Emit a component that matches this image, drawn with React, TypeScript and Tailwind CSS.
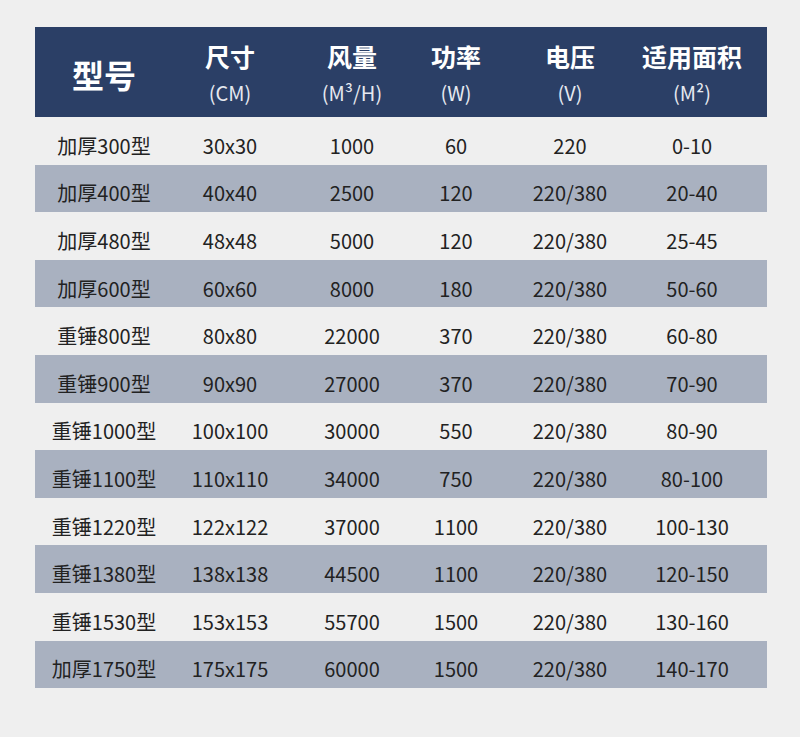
const headers = [
  { title: '尺寸', unit: '(CM)' },
  { title: '风量', unit: '(M³/H)' },
  { title: '功率', unit: '(W)' },
  { title: '电压', unit: '(V)' },
  { title: '适用面积', unit: '(M²)' },
];

const rows = [
  ['加厚300型', '30x30', '1000', '60', '220', '0-10'],
  ['加厚400型', '40x40', '2500', '120', '220/380', '20-40'],
  ['加厚480型', '48x48', '5000', '120', '220/380', '25-45'],
  ['加厚600型', '60x60', '8000', '180', '220/380', '50-60'],
  ['重锤800型', '80x80', '22000', '370', '220/380', '60-80'],
  ['重锤900型', '90x90', '27000', '370', '220/380', '70-90'],
  ['重锤1000型', '100x100', '30000', '550', '220/380', '80-90'],
  ['重锤1100型', '110x110', '34000', '750', '220/380', '80-100'],
  ['重锤1220型', '122x122', '37000', '1100', '220/380', '100-130'],
  ['重锤1380型', '138x138', '44500', '1100', '220/380', '120-150'],
  ['重锤1530型', '153x153', '55700', '1500', '220/380', '130-160'],
  ['加厚1750型', '175x175', '60000', '1500', '220/380', '140-170'],
];

const cols = 'grid grid-cols-[138px_114px_130px_78px_150px_94px_28px]';

export default function App() {
  return (
    <div
      className="w-[800px] h-[737px] bg-[#efefef] pt-[27px] pl-[35px]"
      style={{ fontFamily: '"Noto Sans CJK SC", "Noto Sans", sans-serif' }}
    >
      <div className="w-[732px]">
        <div className={`${cols} h-[90px] bg-[#2b3f66] text-white`}>
          <div className="flex items-center justify-center text-[32px] font-bold pt-[4px]">型号</div>
          {headers.map((h) => (
            <div key={h.title} className="flex flex-col items-center pt-[14px] whitespace-nowrap">
              <span className="text-[25px] font-bold leading-[30px]">{h.title}</span>
              <span className="text-[20px] leading-[30px] mt-[7px] text-[#e6e9f0]">{h.unit}</span>
            </div>
          ))}
          <div />
        </div>
        {rows.map((r, i) => (
          <div
            key={r[0]}
            className={`${cols} h-[47.6px] text-[20px] text-[#222] ${i % 2 === 1 ? 'bg-[#a9b1c0]' : ''}`}
          >
            {r.map((c, j) => (
              <div key={j} className="flex items-center justify-center pt-[10px] whitespace-nowrap">
                {c}
              </div>
            ))}
            <div />
          </div>
        ))}
      </div>
    </div>
  );
}
